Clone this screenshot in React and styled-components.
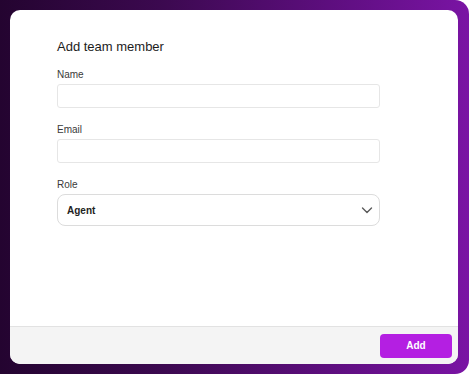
import React from "react";
import styled, { createGlobalStyle } from "styled-components";

const Global = createGlobalStyle`
  html, body { margin: 0; padding: 0; background: #ffffff; }
  body { font-family: "Liberation Sans", Arial, sans-serif; }
`;

const Frame = styled.div`
  width: 469px;
  height: 374px;
  box-sizing: border-box;
  padding: 10px 11px 10px 10px;
  background: linear-gradient(90deg, #240430 0%, #3c0950 35%, #5d0e7e 70%, #7a14a4 100%);
  border-radius: 0 14px 14px 0;
  display: flex;
`;

const Card = styled.div`
  flex: 1;
  background: #ffffff;
  border-radius: 10px;
  overflow: hidden;
  display: flex;
  flex-direction: column;
`;

const Body = styled.div`
  flex: 1;
  padding: 28px 0 0 47px;
  display: flex;
  flex-direction: column;
`;

const Title = styled.h2`
  margin: 0 0 13px;
  font-size: 13px;
  line-height: 18px;
  font-weight: 400;
  color: #1c1c1c;
`;

const Field = styled.div`
  width: 323px;
  display: flex;
  flex-direction: column;
  margin-bottom: 16px;
`;

const Label = styled.label`
  font-size: 10px;
  line-height: 12px;
  color: #3a3a3a;
  margin-bottom: 3px;
`;

const Input = styled.div`
  height: 24px;
  box-sizing: border-box;
  border: 1px solid #e6e6e6;
  border-radius: 3px;
  background: #fff;
`;

const Select = styled.div`
  height: 32px;
  box-sizing: border-box;
  border: 1px solid #dcdcdc;
  border-radius: 8px;
  display: flex;
  align-items: center;
  justify-content: space-between;
  padding: 0 6px 0 9px;
  font-size: 10px;
  font-weight: 700;
  color: #222;
`;

const Footer = styled.div`
  height: 38px;
  box-sizing: border-box;
  border-top: 1px solid #e2e2e2;
  background: #f4f4f4;
  display: flex;
  align-items: center;
  justify-content: flex-end;
  padding: 0 6px 0 0;
`;

const Button = styled.button`
  width: 72px;
  height: 24px;
  border: none;
  border-radius: 4px;
  background: #b41fe2;
  color: #fff;
  font-family: inherit;
  font-size: 10px;
  font-weight: 700;
`;

const Chevron = () => (
  <svg width="12" height="12" viewBox="0 0 12 12" fill="none">
    <path d="M1.5 4l4.5 4.5L10.5 4" stroke="#5a5a5a" strokeWidth="1.4" strokeLinecap="round" strokeLinejoin="round" />
  </svg>
);

export default function App() {
  return (
    <>
      <Global />
      <Frame>
        <Card>
          <Body>
            <Title>Add team member</Title>
            <Field>
              <Label>Name</Label>
              <Input />
            </Field>
            <Field>
              <Label>Email</Label>
              <Input />
            </Field>
            <Field>
              <Label>Role</Label>
              <Select>
                <span>Agent</span>
                <Chevron />
              </Select>
            </Field>
          </Body>
          <Footer>
            <Button>Add</Button>
          </Footer>
        </Card>
      </Frame>
    </>
  );
}
